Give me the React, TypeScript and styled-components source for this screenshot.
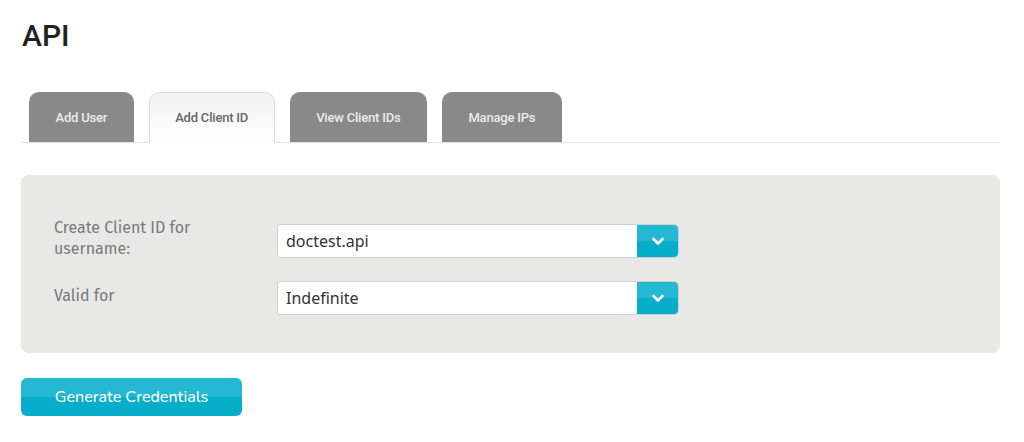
import styled, { createGlobalStyle } from 'styled-components';

const GlobalStyle = createGlobalStyle`
  body {
    margin: 0;
    background: #fff;
    font-family: 'Open Sans', 'Noto Sans', sans-serif;
  }
`;

const TABS = ['Add User', 'Add Client ID', 'View Client IDs', 'Manage IPs'];
const ACTIVE_TAB = 'Add Client ID';

const ChevronDown = () => (
  <svg width="14" height="9" viewBox="0 0 14 9">
    <path d="M2.5 2 L7 6.5 L11.5 2" fill="none" stroke="#fff" strokeWidth="2.6" strokeLinecap="round" strokeLinejoin="round" />
  </svg>
);

const SelectField = ({ value }: { value: string }) => (
  <Select>
    <SelectValue>{value}</SelectValue>
    <SelectToggle>
      <ChevronDown />
    </SelectToggle>
  </Select>
);

export default function App() {
  return (
    <Page>
      <GlobalStyle />
      <Title>API</Title>

      <TabBar>
        {TABS.map((tab) => (
          <Tab key={tab} $active={tab === ACTIVE_TAB}>
            {tab}
          </Tab>
        ))}
      </TabBar>

      <FormPanel>
        <FormRow>
          <Label>
            Create Client ID for
            <br />
            username:
          </Label>
          <SelectField value="doctest.api" />
        </FormRow>
        <FormRow>
          <Label>Valid for</Label>
          <SelectField value="Indefinite" />
        </FormRow>
      </FormPanel>

      <PrimaryButton>Generate Credentials</PrimaryButton>
    </Page>
  );
}

const Page = styled.div`
  padding: 17px 24px 0 21px;
  width: 979px;
`;

const Title = styled.h1`
  margin: 0 0 0 1px;
  font-family: 'Roboto', 'Liberation Sans', sans-serif;
  font-weight: 500;
  font-size: 30px;
  line-height: 38px;
  color: #222;
`;

const TabBar = styled.div`
  display: flex;
  gap: 15px;
  margin-top: 37px;
  padding-left: 8px;
  border-bottom: 1px solid #e2e2e2;
`;

const Tab = styled.div<{ $active?: boolean }>`
  display: flex;
  align-items: center;
  justify-content: center;
  padding: 0 25.5px;
  box-sizing: border-box;
  border-radius: 10px 10px 0 0;
  font-family: 'Roboto', 'Liberation Sans', sans-serif;
  font-weight: 500;
  font-size: 13px;
  letter-spacing: -0.2px;
  color: ${(p) => (p.$active ? '#666' : '#ececec')};
  background: ${(p) => (p.$active ? 'linear-gradient(#f2f2f2, #ffffff)' : '#898989')};
  border: ${(p) => (p.$active ? '1px solid #dcdcdc' : '1px solid #898989')};
  border-bottom: none;
  margin-bottom: ${(p) => (p.$active ? '-1px' : '0')};
  padding-bottom: ${(p) => (p.$active ? '1px' : '0')};
  height: ${(p) => (p.$active ? '51px' : '50px')};
`;

const FormPanel = styled.div`
  margin-top: 32px;
  background: #e8e8e7;
  border-radius: 8px;
  padding: 45px 32px 38px 33px;
  display: flex;
  flex-direction: column;
  gap: 19px;
`;

const FormRow = styled.div`
  display: flex;
  align-items: center;
`;

const Label = styled.div`
  width: 223px;
  margin: -3px 0 3px;
  font-family: 'Fira Sans', 'Noto Sans', 'Open Sans', sans-serif;
  font-size: 16px;
  line-height: 21px;
  color: #797979;
`;

const Select = styled.div`
  display: flex;
  width: 402px;
  height: 34px;
  box-sizing: border-box;
  border: 1px solid #cfcfcf;
  border-radius: 3px 5px 5px 3px;
  background: #fff;
  overflow: hidden;
`;

const SelectValue = styled.div`
  flex: 1;
  display: flex;
  align-items: center;
  padding-left: 8px;
  font-family: 'Noto Sans', 'Open Sans', sans-serif;
  font-size: 16px;
  color: #333;
`;

const SelectToggle = styled.div`
  width: 41px;
  display: flex;
  align-items: center;
  justify-content: center;
  background: linear-gradient(#25b8d2 0%, #25b8d2 50%, #08adca 50%, #08adca 100%);
`;

const PrimaryButton = styled.button`
  display: block;
  margin-top: 25px;
  width: 221px;
  height: 38px;
  border: none;
  border-radius: 6px;
  background: linear-gradient(#25b8d2 0%, #25b8d2 50%, #08adca 50%, #08adca 100%);
  color: #fff;
  font-family: 'Nunito', 'Lato', 'Noto Sans', sans-serif;
  font-size: 16px;
  font-weight: 500;
  cursor: pointer;
`;
